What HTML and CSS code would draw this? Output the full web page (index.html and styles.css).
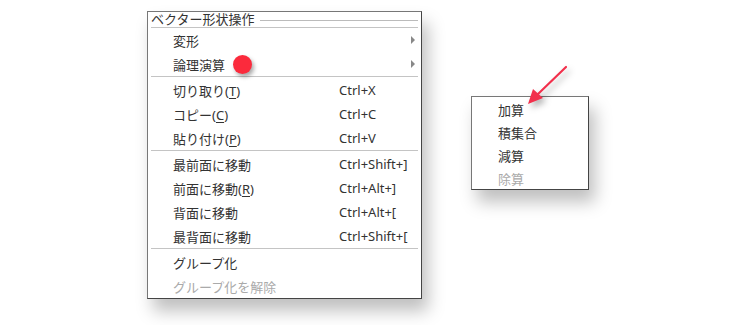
FILE: index.html
```html
<!DOCTYPE html>
<html lang="ja">
<head>
    <meta charset="UTF-8">
    <title>ベクター形状操作</title>
    <link rel="stylesheet" href="styles.css">
</head>
<body>

<div class="canvas">
    <div class="menu main-menu">
        <div class="menu-title">
            <span>ベクター形状操作</span>
            <span class="title-line"></span>
        </div>
        <div class="sep"></div>
        <div class="item"><span class="label">変形</span><span class="arrow"></span></div>
        <div class="item"><span class="label">論理演算</span><span class="arrow"></span></div>
        <div class="sep"></div>
        <div class="item"><span class="label">切り取り(<u>T</u>)</span><span class="key">Ctrl+X</span></div>
        <div class="item"><span class="label">コピー(<u>C</u>)</span><span class="key">Ctrl+C</span></div>
        <div class="item"><span class="label">貼り付け(<u>P</u>)</span><span class="key">Ctrl+V</span></div>
        <div class="sep"></div>
        <div class="item"><span class="label">最前面に移動</span><span class="key">Ctrl+Shift+]</span></div>
        <div class="item"><span class="label">前面に移動(<u>R</u>)</span><span class="key">Ctrl+Alt+]</span></div>
        <div class="item"><span class="label">背面に移動</span><span class="key">Ctrl+Alt+[</span></div>
        <div class="item"><span class="label">最背面に移動</span><span class="key">Ctrl+Shift+[</span></div>
        <div class="sep"></div>
        <div class="item"><span class="label">グループ化</span></div>
        <div class="item disabled"><span class="label">グループ化を解除</span></div>

        <!-- marker over the hovered item -->
        <div class="dot"></div>
    </div>

    <div class="menu sub-menu">
        <div class="item"><span class="label">加算</span></div>
        <div class="item"><span class="label">積集合</span></div>
        <div class="item"><span class="label">減算</span></div>
        <div class="item disabled"><span class="label">除算</span></div>
    </div>

    <svg class="pointer" width="60" height="60" viewBox="0 0 60 60">
        <line x1="49" y1="4" x2="20" y2="32" stroke="#f2304c" stroke-width="2.2" stroke-linecap="round"/>
        <polygon points="11,41 16,26 26,35" fill="#f2304c"/>
    </svg>
</div>

</body>
</html>
```

FILE: styles.css
```css
body {
    margin: 0;
    background-color: #fff;
    font-family: "Noto Sans", "Noto Sans CJK JP", sans-serif;
    font-size: 13px;
    color: #333;
}

.canvas {
    position: relative;
    width: 730px;
    height: 325px;
    padding: 11px 0 0 147px;
    box-sizing: border-box;
}

.menu {
    background-color: #fff;
    border: 1px solid #777;
    border-right-color: #444;
    border-bottom-color: #444;
    box-sizing: border-box;
}

.main-menu {
    position: relative;
    width: 275px;
    box-shadow: 6px 12px 16px rgba(0, 0, 0, 0.25);
}

.menu-title {
    display: flex;
    align-items: center;
    gap: 6px;
    height: 15px;
    padding: 0 3px 0 3px;
    color: #333;
    line-height: 15px;
}

.title-line {
    flex: 1;
    height: 1px;
    background-color: #bbb;
    margin-top: 1px;
}

.sep {
    height: 1px;
    margin: 0 3px;
    background-color: #c4c4c4;
}

.item + .sep {
    margin-bottom: 1px;
}

.item {
    display: flex;
    align-items: center;
    height: 24px;
    padding-left: 25px;
    padding-right: 6px;
}

.item .label {
    flex: 1;
}

.item .key {
    width: 76px;
}

.item u {
    text-decoration-thickness: 1px;
    text-underline-offset: 2px;
}

.arrow {
    width: 0;
    height: 0;
    border-top: 4px solid transparent;
    border-bottom: 4px solid transparent;
    border-left: 4px solid #888;
}

.disabled {
    color: #aaa;
}

.dot {
    position: absolute;
    left: 85px;
    top: 43px;
    width: 19px;
    height: 19px;
    border-radius: 50%;
    background-color: #fb2a3c;
    box-shadow: 2px 3px 4px rgba(0, 0, 0, 0.35);
}

.sub-menu {
    position: absolute;
    left: 471px;
    top: 96px;
    width: 118px;
    height: 94px;
    padding: 1px 0;
    box-shadow: 6px 12px 16px rgba(0, 0, 0, 0.25);
}

.sub-menu .item {
    height: 23px;
    padding-left: 26px;
}

.pointer {
    position: absolute;
    left: 517px;
    top: 63px;
    filter: drop-shadow(3px 4px 3px rgba(0, 0, 0, 0.3));
}
```
